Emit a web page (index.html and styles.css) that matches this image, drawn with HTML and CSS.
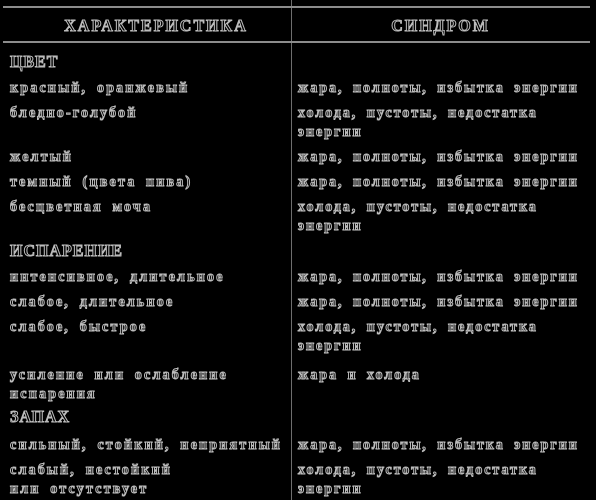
FILE: index.html
```html
<!DOCTYPE html>
<html lang="ru">
<head>
<meta charset="utf-8">
<link rel="stylesheet" href="styles.css">
</head>
<body>
<div class="sheet">
  <div class="row head">
    <div class="cell">ХАРАКТЕРИСТИКА</div>
    <div class="cell">СИНДРОМ</div>
  </div>
  <div class="body">
    <div class="row section first"><div class="cell">ЦВЕТ</div><div class="cell"></div></div>
    <div class="row"><div class="cell">красный, оранжевый</div><div class="cell">жара, полноты, избытка энергии</div></div>
    <div class="row"><div class="cell">бледно-голубой</div><div class="cell">холода, пустоты, недостатка<br>энергии</div></div>
    <div class="row"><div class="cell">желтый</div><div class="cell">жара, полноты, избытка энергии</div></div>
    <div class="row"><div class="cell">темный (цвета пива)</div><div class="cell">жара, полноты, избытка энергии</div></div>
    <div class="row"><div class="cell">бесцветная моча</div><div class="cell">холода, пустоты, недостатка<br>энергии</div></div>
    <div class="row section"><div class="cell">ИСПАРЕНИЕ</div><div class="cell"></div></div>
    <div class="row"><div class="cell">интенсивное, длительное</div><div class="cell">жара, полноты, избытка энергии</div></div>
    <div class="row"><div class="cell">слабое, длительное</div><div class="cell">жара, полноты, избытка энергии</div></div>
    <div class="row"><div class="cell">слабое, быстрое</div><div class="cell">холода, пустоты, недостатка<br>энергии</div></div>
    <div class="row spaced"><div class="cell">усиление или ослабление<br>испарения</div><div class="cell">жара и холода</div></div>
    <div class="row section tight"><div class="cell">ЗАПАХ</div><div class="cell"></div></div>
    <div class="row"><div class="cell">сильный, стойкий, неприятный</div><div class="cell">жара, полноты, избытка энергии</div></div>
    <div class="row"><div class="cell">слабый, нестойкий<br>или отсутствует</div><div class="cell">холода, пустоты, недостатка<br>энергии</div></div>
  </div>
</div>
</body>
</html>
```

FILE: styles.css
```css
html, body {
  margin: 0;
  padding: 0;
  background: #000;
}

body {
  width: 596px;
  height: 500px;
  overflow: hidden;
  font-family: "Liberation Serif", "Times New Roman", serif;
  color: #000;
  -webkit-text-stroke: 1px #bcbcbc;
}

.sheet {
  margin-left: 3px;
  width: 587px;
  min-height: 500px;
  padding-top: 6px;
  box-sizing: border-box;
  background: linear-gradient(#6e6e6e, #6e6e6e) no-repeat 288px 0 / 1px 100%;
  filter: grayscale(1);
}

.row {
  display: grid;
  grid-template-columns: 288px 1fr;
}

.head {
  border-top: 2px solid #8c8c8c;
  border-bottom: 2px solid #8c8c8c;
  height: 37px;
  box-sizing: border-box;
  align-items: center;
  padding-top: 2px;
  font-size: 16px;
  font-weight: bold;
  letter-spacing: 2px;
  text-align: center;
}

.head .cell:first-child {
  padding-left: 18px;
}

.body {
  padding-top: 6px;
  font-size: 14px;
  font-weight: bold;
  letter-spacing: 2.2px;
  word-spacing: 4px;
  line-height: 19px;
}

.body .row .cell {
  padding: 3px 0 3px 7px;
}

.body .row .cell + .cell {
  padding-left: 7px;
  letter-spacing: 2px;
}

.body .section .cell {
  padding: 2px 0 2px 7px;
  line-height: 22px;
  font-size: 16px;
  letter-spacing: 1px;
}

.body .spaced .cell {
  padding-top: 7px;
}

.body .section.tight .cell {
  padding: 0 0 4px 7px;
}
```
